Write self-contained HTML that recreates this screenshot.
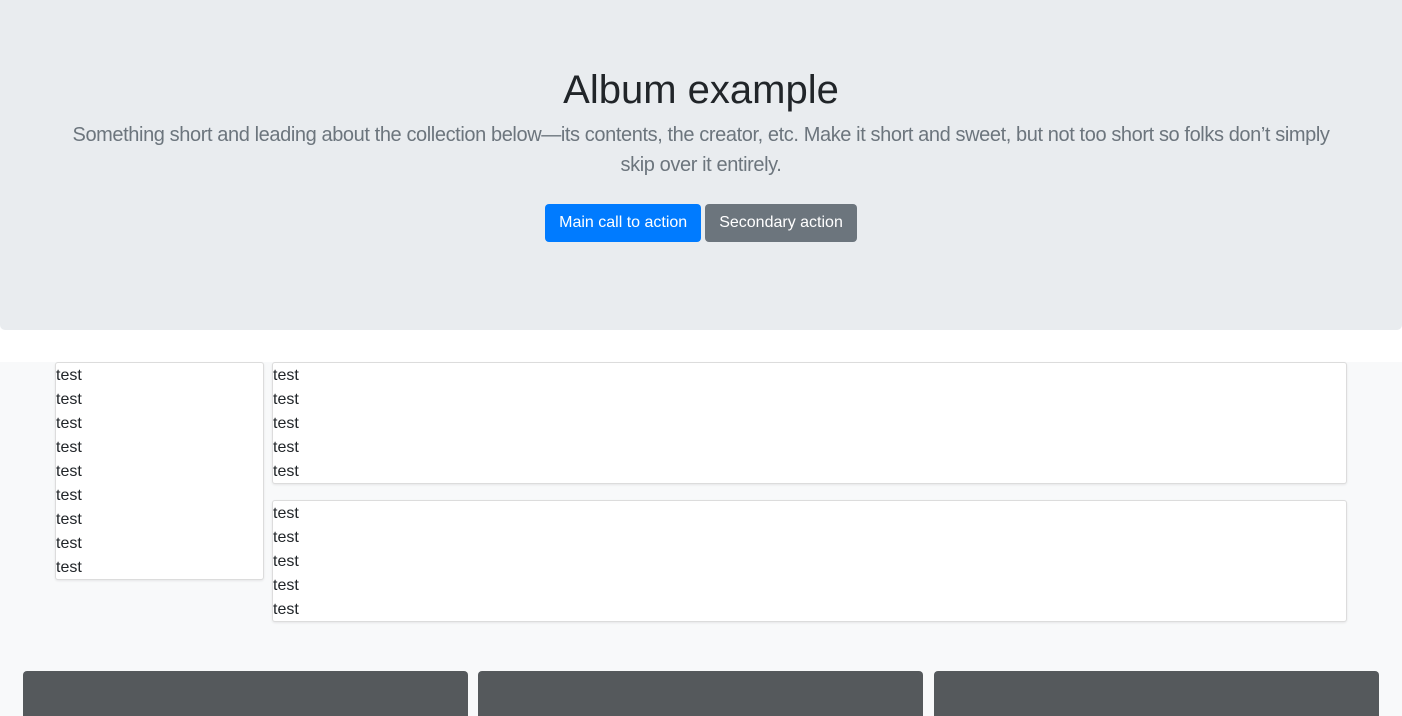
<!DOCTYPE html>
<html><head><style>
*{box-sizing:border-box;margin:0;padding:0}
html{width:1402px;height:716px;overflow:hidden}
body{width:1402px;height:716px;overflow:hidden;font-family:"Liberation Sans",sans-serif;color:#212529;background:#fff;position:relative}
.jumbo{position:absolute;left:0;top:0;width:1402px;height:330px;background:#e9ecef;border-radius:0 0 5px 5px;text-align:center}
h1{position:absolute;top:66px;width:100%;font-size:40px;font-weight:500;line-height:48px}
.lead{position:absolute;top:120px;left:60px;right:60px;font-size:20px;line-height:30px;color:#6c757d;font-weight:300;letter-spacing:-0.4px}
.btns{position:absolute;top:204px;width:100%;text-align:center;font-size:0}
.btn{display:inline-block;height:38px;line-height:38px;padding:0 14px;font-size:16px;color:#fff;border-radius:4px;margin:0 2px}
.bg{position:absolute;left:0;top:362px;width:1402px;height:354px;background:#f8f9fa}
.box{position:absolute;background:#fff;border:1px solid #dcdcdc;border-radius:3px;box-shadow:0 1px 2px rgba(0,0,0,.08);font-size:16px;line-height:24px;padding-top:1px}
.card{position:absolute;top:671px;height:45px;width:445px;background:#55595c;border-radius:4px 4px 0 0}
</style></head><body>
<div class="jumbo">
<h1>Album example</h1>
<p class="lead">Something short and leading about the collection below—its contents, the creator, etc. Make it short and sweet, but not too short so folks don’t simply skip over it entirely.</p>
<div class="btns"><span class="btn" style="background:#007bff">Main call to action</span><span class="btn" style="background:#6c757d">Secondary action</span></div>
</div>
<div class="bg"></div>
<div class="box" style="left:55px;top:362px;width:209px;height:218px">test<br>test<br>test<br>test<br>test<br>test<br>test<br>test<br>test</div>
<div class="box" style="left:272px;top:362px;width:1075px;height:122px">test<br>test<br>test<br>test<br>test</div>
<div class="box" style="left:272px;top:500px;width:1075px;height:122px">test<br>test<br>test<br>test<br>test</div>
<div class="card" style="left:23px"></div>
<div class="card" style="left:478px"></div>
<div class="card" style="left:934px"></div>
</body></html>
